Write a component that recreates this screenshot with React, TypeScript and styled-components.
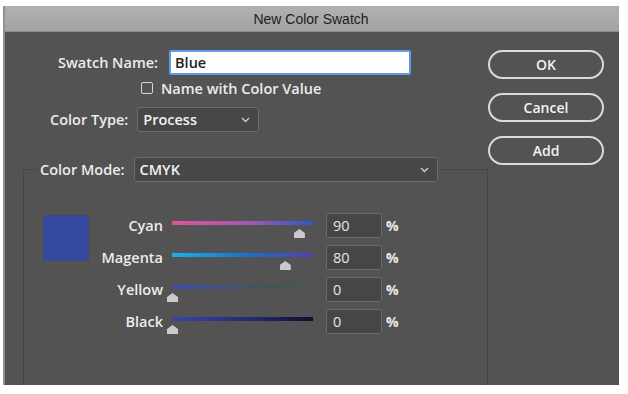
import React from "react";
import styled, { createGlobalStyle } from "styled-components";

const GlobalStyle = createGlobalStyle`
    body {
        margin: 0;
        background: #ffffff;
        font-family: "Open Sans", "Liberation Sans", sans-serif;
    }
`;

const Window = styled.div`
    margin: 6px 0 0 3px;
    width: 616px;
    height: 379px;
    background: #535353;
    border-left: 2px solid #8c9098;
    box-sizing: border-box;
    display: flex;
    flex-direction: column;
    overflow: hidden;
`;

const TitleBar = styled.div`
    height: 25px;
    flex: none;
    display: flex;
    align-items: center;
    justify-content: center;
    background: linear-gradient(#b1b1b1, #a3a3a3);
    border-bottom: 1px solid #8a8a8a;
    margin-left: -2px;
    font-family: "Liberation Sans", Arial, sans-serif;
    font-size: 14px;
    color: #1c1c1c;
`;

const Body = styled.div`
    flex: 1;
    display: grid;
    grid-template-columns: 483px 116px;
    min-height: 0;
`;

const Main = styled.div`
    display: flex;
    flex-direction: column;
    color: #ececec;
    font-size: 14.5px;
    font-weight: 600;
`;

const Row = styled.div<{ $top: number; $left: number; $height: number; $gap?: number }>`
    display: flex;
    align-items: center;
    height: ${(p) => p.$height}px;
    margin-top: ${(p) => p.$top}px;
    padding-left: ${(p) => p.$left}px;
    gap: ${(p) => p.$gap ?? 7}px;
`;

const Label = styled.span`
    white-space: nowrap;
`;

const TextInput = styled.div`
    width: 242px;
    height: 25px;
    box-sizing: border-box;
    margin-left: 4px;
    background: #ffffff;
    border: 2px solid #5b9de6;
    border-radius: 2px;
    color: #222;
    padding-left: 4px;
    display: flex;
    align-items: center;
`;

const CheckBox = styled.span`
    width: 12px;
    height: 12px;
    box-sizing: border-box;
    border: 1px solid #d4d4d4;
    border-radius: 2px;
`;

const Select = styled.div<{ $width: number }>`
    width: ${(p) => p.$width}px;
    height: 25px;
    box-sizing: border-box;
    background: #474747;
    border: 1px solid #6c6c6c;
    border-radius: 3px;
    display: flex;
    align-items: center;
    justify-content: space-between;
    padding: 0 8px 0 5px;
    color: #f2f2f2;
`;

const Group = styled.fieldset`
    margin: 25px 0 0 18px;
    flex: 1;
    padding: 0 0 0 19px;
    border: 1px solid #464646;
    border-bottom: none;
    min-width: 0;
`;

const Legend = styled.legend`
    display: flex;
    align-items: center;
    height: 25px;
    gap: 9px;
    padding: 0 3px;
    margin-left: -6px;
`;

const Sliders = styled.div`
    margin-top: 31px;
    display: grid;
    grid-template-columns: 46px 74px 150px 69px auto;
    grid-auto-rows: 25px;
    row-gap: 7px;
`;

const Swatch = styled.div`
    grid-row: 1 / span 2;
    grid-column: 1;
    width: 46px;
    height: 46px;
    margin-top: 2px;
    box-sizing: border-box;
    background: #3449a0;
    border: 1px solid #3d4a7a;
`;

const SliderLabel = styled.span`
    grid-column: 2;
    text-align: right;
    align-self: center;
`;

const Track = styled.div`
    grid-column: 3;
    position: relative;
    margin-left: 9px;
    width: 141px;
`;

const Bar = styled.div<{ $gradient: string }>`
    margin-top: 8px;
    height: 4px;
    background: ${(p) => p.$gradient};
`;

const Thumb = styled.div`
    position: absolute;
    top: 16px;
    width: 11px;
    height: 9px;
    margin-left: -5px;
    background: #cacaca;
    clip-path: polygon(50% 0, 100% 45%, 100% 100%, 0 100%, 0 45%);
    border-radius: 2px 2px 0 0;
`;

const NumberBox = styled.div`
    grid-column: 4;
    margin-left: 13px;
    width: 56px;
    height: 25px;
    box-sizing: border-box;
    background: #464646;
    border: 1px solid #6a6a6a;
    border-radius: 2px;
    display: flex;
    align-items: center;
    padding-left: 6px;
    font-weight: 400;
    font-size: 14.5px;
    color: #e4e4e4;
`;

const Percent = styled.span`
    grid-column: 5;
    margin-left: 4px;
    align-self: center;
    font-weight: 700;
    font-size: 14px;
`;

const Buttons = styled.div`
    display: flex;
    flex-direction: column;
    gap: 14px;
    padding-top: 18px;
`;

const Button = styled.button`
    height: 29px;
    width: 116px;
    box-sizing: border-box;
    border: 2px solid #dadada;
    border-radius: 15px;
    background: transparent;
    color: #f2f2f2;
    font-family: "Open Sans", "Liberation Sans", sans-serif;
    font-size: 14px;
    font-weight: 600;
    padding: 0;
`;

const Chevron = () => (
    <svg width="9" height="6" viewBox="0 0 9 6">
        <path d="M1 1l3.5 3.5L8 1" fill="none" stroke="#cfcfcf" strokeWidth="1.3" />
    </svg>
);

const channels = [
    { name: "Cyan", value: 90, gradient: "linear-gradient(90deg, #e0539c, #a25ab2 55%, #2a58c4)" },
    { name: "Magenta", value: 80, gradient: "linear-gradient(90deg, #17b2e8, #1f6dc8 55%, #5241b2)" },
    { name: "Yellow", value: 0, gradient: "linear-gradient(90deg, #3a4fae, #44555e 60%, #485848)" },
    { name: "Black", value: 0, gradient: "linear-gradient(90deg, #3848aa, #22286e 60%, #10102a)" },
];

export default function App() {
    return (
        <>
            <GlobalStyle />
            <Window>
                <TitleBar>New Color Swatch</TitleBar>
                <Body>
                    <Main>
                        <Row $top={18} $left={53} $height={25}>
                            <Label>Swatch Name:</Label>
                            <TextInput>Blue</TextInput>
                        </Row>
                        <Row $top={6} $left={136} $height={14} $gap={8}>
                            <CheckBox />
                            <Label>Name with Color Value</Label>
                        </Row>
                        <Row $top={12} $left={45} $height={25} $gap={9}>
                            <Label>Color Type:</Label>
                            <Select $width={122}>
                                Process
                                <Chevron />
                            </Select>
                        </Row>
                        <Group>
                            <Legend>
                                <Label>Color Mode:</Label>
                                <Select $width={304}>
                                    CMYK
                                    <Chevron />
                                </Select>
                            </Legend>
                            <Sliders>
                                <Swatch />
                                {channels.map((c, i) => (
                                    <React.Fragment key={c.name}>
                                        <SliderLabel style={{ gridRow: i + 1 }}>{c.name}</SliderLabel>
                                        <Track style={{ gridRow: i + 1 }}>
                                            <Bar $gradient={c.gradient} />
                                            <Thumb style={{ left: `${(c.value / 100) * 141}px` }} />
                                        </Track>
                                        <NumberBox style={{ gridRow: i + 1 }}>{c.value}</NumberBox>
                                        <Percent style={{ gridRow: i + 1 }}>%</Percent>
                                    </React.Fragment>
                                ))}
                            </Sliders>
                        </Group>
                    </Main>
                    <Buttons>
                        <Button>OK</Button>
                        <Button>Cancel</Button>
                        <Button>Add</Button>
                    </Buttons>
                </Body>
            </Window>
        </>
    );
}
